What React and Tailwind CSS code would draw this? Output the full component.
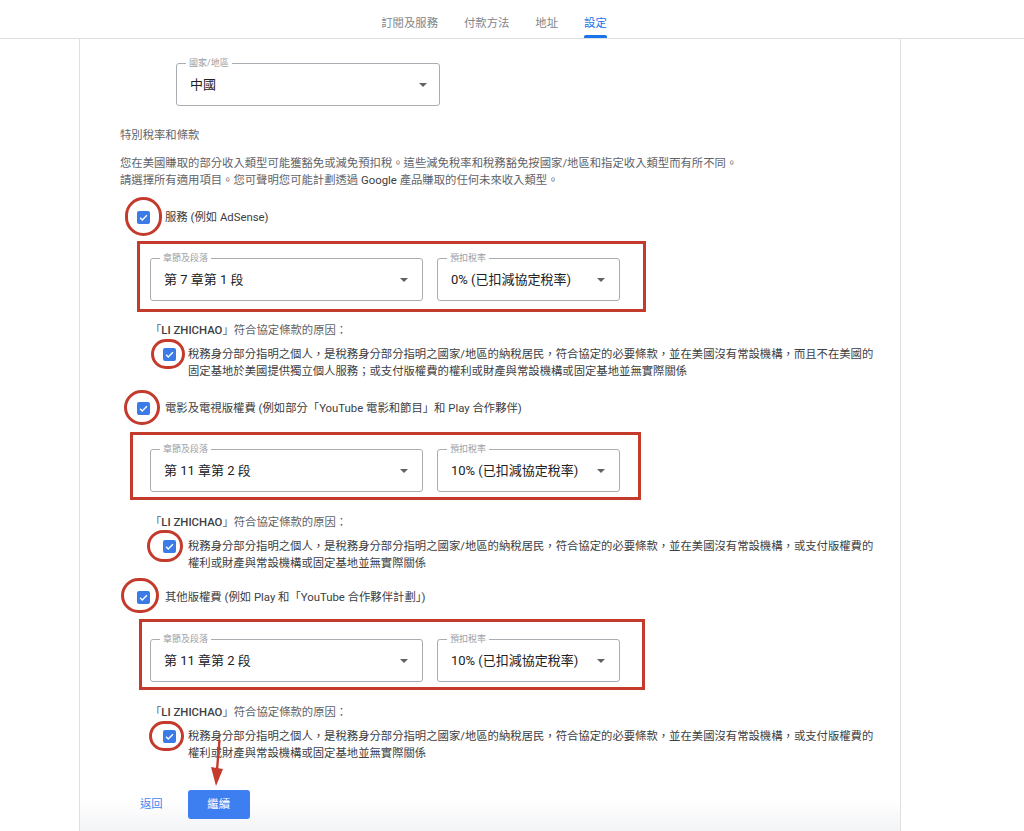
import React from 'react'

const font = { fontFamily: 'Roboto, "Noto Sans CJK TC", sans-serif' }

const Arrow = () => (
  <span className="h-0 w-0 border-x-[4px] border-t-[4px] border-x-transparent border-t-[#5f6368]" />
)

const Select = ({ label, value, w }) => (
  <div className={`relative flex h-[43px] items-center rounded-[3px] border border-[#a9acb0] pl-[13px] pr-[14px] ${w}`}>
    <span className="absolute -top-[6px] left-[9px] bg-white px-[3px] text-[9px] leading-[11px] text-[#9aa0a6]">{label}</span>
    <span className="flex-1 text-[13px] leading-[16px] text-[#202124]">{value}</span>
    <Arrow />
  </div>
)

const Check = ({ ring }) => (
  <span className="relative mt-[1.5px] inline-flex h-[13px] w-[13px] shrink-0 items-center justify-center rounded-[2px] bg-[#3b7be8]">
    <svg viewBox="0 0 24 24" className="h-[11px] w-[11px]">
      <path d="M4.5 12.5l4.8 4.8L19.5 7" fill="none" stroke="white" strokeWidth="3" />
    </svg>
    <span className={`absolute rounded-full border-[3.5px] border-[#c43b2d] ${ring}`} />
  </span>
)

const Reason = ({ line1, line2, ring, className = '', children }) => (
  <div className={`relative ${className}`}>
    <p className="ml-[30px] text-[11.35px] leading-[16px] text-[#5f6368]">
      「<span className="font-medium text-[#3c4043]">LI ZHICHAO</span>」符合協定條款的原因：
    </p>
    <div className="relative ml-[43px] mt-[8px] flex gap-[12px]">
      <Check ring={ring} />
      <p className="whitespace-nowrap text-[11.35px] leading-[17px] text-[#3c4043]">
        {line1}
        <br />
        {line2}
      </p>
      {children}
    </div>
  </div>
)

const RateBox = ({ pad, section, rate }) => (
  <div className={`flex w-fit gap-[14px] border-[3px] border-[#c43b2d] ${pad}`}>
    <Select label="章節及段落" value={section} w="w-[273px]" />
    <Select label="預扣稅率" value={rate} w="w-[183px]" />
  </div>
)

const lineA = '稅務身分部分指明之個人，是稅務身分部分指明之國家/地區的納稅居民，符合協定的必要條款，並在美國沒有常設機構，'

export default function App() {
  const tabs = ['訂閱及服務', '付款方法', '地址', '設定']

  return (
    <div className="min-h-[831px] bg-white" style={font}>
      {/* tabs */}
      <div className="h-[39px] border-b border-[#e0e0e0]">
        <div className="ml-[79px] flex h-full w-[822px] justify-center gap-[26px] pl-[8px]">
          {tabs.map((t, i) => (
            <div key={t} className="relative flex h-full items-center pt-[7px]">
              <span className={`text-[11.35px] leading-[16px] ${i === 3 ? 'text-[#1a73e8]' : 'text-[#80868b]'}`}>{t}</span>
              {i === 3 && <span className="absolute bottom-0 left-0 h-[3px] w-full rounded-t-[2px] bg-[#1a73e8]" />}
            </div>
          ))}
        </div>
      </div>

      <div className="ml-[79px] min-h-[792px] w-[822px] border-x border-[#e0e0e0] bg-gradient-to-b from-white from-[96%] to-[#f3f4f6] pl-[40px] pt-[24px]">
        {/* country */}
        <div className="relative ml-[56px] flex h-[43px] w-[264px] items-center rounded-[3px] border border-[#a9acb0] pl-[13px] pr-[12px]">
          <span className="absolute -top-[6px] left-[9px] bg-white px-[3px] text-[9px] leading-[11px] text-[#9aa0a6]">國家/地區</span>
          <span className="flex-1 text-[13px] leading-[16px] text-[#202124]">中國</span>
          <Arrow />
        </div>

        <h3 className="mt-[21px] text-[11.35px] leading-[16px] text-[#5f6368]">特別稅率和條款</h3>
        <p className="mt-[12px] text-[11.35px] leading-[17px] text-[#5f6368]">
          您在美國賺取的部分收入類型可能獲豁免或減免預扣稅。這些減免稅率和稅務豁免按國家/地區和指定收入類型而有所不同。
          <br />
          請選擇所有適用項目。您可聲明您可能計劃透過 <span className="text-[#3c4043]">Google</span> 產品賺取的任何未來收入類型。
        </p>

        {/* services */}
        <div className="ml-[17px] mt-[20px] flex gap-[15px]">
          <Check ring="-left-[12px] -top-[14px] h-[39px] w-[37px]" />
          <span className="text-[11.35px] leading-[16px] text-[#3c4043]">服務 (例如 AdSense)</span>
        </div>
        <div className="ml-[17px] mt-[16px]">
          <RateBox pad="pl-[10px] pr-[23px] pt-[14px] pb-[8px]" section="第 7 章第 1 段" rate="0% (已扣減協定稅率)" />
        </div>
        <Reason
          className="mt-[10px]"
          ring="-left-[12px] -top-[9px] h-[30px] w-[34px]"
          line1={lineA + '而且不在美國的'}
          line2="固定基地於美國提供獨立個人服務；或支付版權費的權利或財產與常設機構或固定基地並無實際關係"
        />

        {/* film & tv */}
        <div className="ml-[17px] mt-[20px] flex gap-[15px]">
          <Check ring="-left-[13px] -top-[12px] h-[35px] w-[36px]" />
          <span className="text-[11.35px] leading-[16px] text-[#3c4043]">電影及電視版權費 (例如部分「YouTube 電影和節目」和 Play 合作夥伴)</span>
        </div>
        <div className="ml-[10px] mt-[16px]">
          <RateBox pad="pl-[17px] pr-[18px] pt-[14px] pb-[5px]" section="第 11 章第 2 段" rate="10% (已扣減協定稅率)" />
        </div>
        <Reason
          className="mt-[14px]"
          ring="-left-[16px] -top-[10px] h-[32px] w-[36px]"
          line1={lineA + '或支付版權費的'}
          line2="權利或財產與常設機構或固定基地並無實際關係"
        />

        {/* other royalties */}
        <div className="ml-[17px] mt-[17px] flex gap-[15px]">
          <Check ring="-left-[16px] -top-[13px] h-[35px] w-[38px]" />
          <span className="text-[11.35px] leading-[16px] text-[#3c4043]">其他版權費 (例如 Play 和「YouTube 合作夥伴計劃」)</span>
        </div>
        <div className="ml-[19px] mt-[14px]">
          <RateBox pad="pl-[8px] pr-[22px] pt-[17px] pb-[5px]" section="第 11 章第 2 段" rate="10% (已扣減協定稅率)" />
        </div>
        <Reason
          className="mt-[14px]"
          ring="-left-[14px] -top-[9px] h-[30px] w-[35px]"
          line1={lineA + '或支付版權費的'}
          line2="權利或財產與常設機構或固定基地並無實際關係"
        >
          <svg className="absolute left-[47px] top-[12px] h-[46px] w-[14px]" viewBox="0 0 14 46">
            <path d="M9.5 0 L7 30" stroke="#c43b2d" strokeWidth="2.4" fill="none" />
            <path d="M1 27 L13 29 L6 46 Z" fill="#c43b2d" />
          </svg>
        </Reason>

        {/* actions */}
        <div className="mt-[28px] flex items-center gap-[25px] pl-[20px]">
          <span className="text-[11.35px] text-[#4285f4]">返回</span>
          <button className="h-[29px] w-[62px] rounded-[3px] bg-[#3d7ff0] text-[11.35px] text-white">繼續</button>
        </div>
      </div>
    </div>
  )
}
